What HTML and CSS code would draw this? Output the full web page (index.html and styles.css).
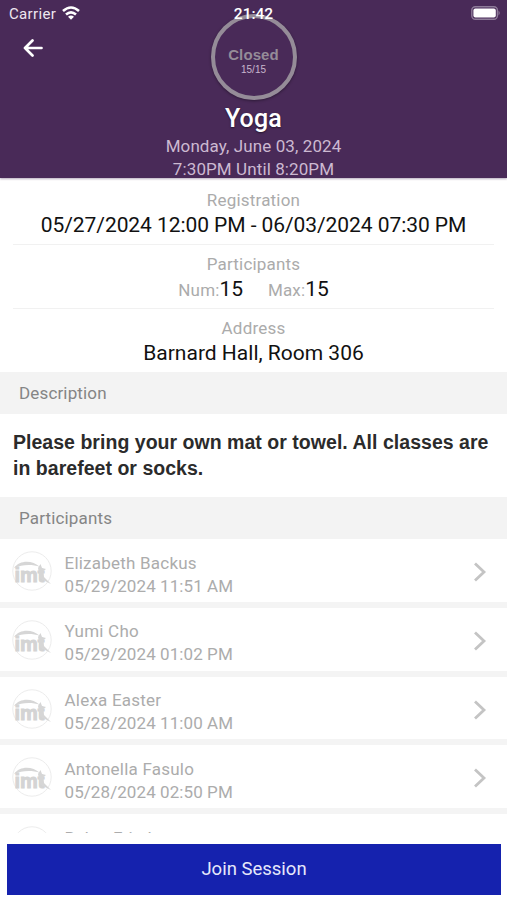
FILE: index.html
```html
<!DOCTYPE html>
<html lang="en">
<head>
<meta charset="utf-8">
<title>Yoga</title>
<link rel="stylesheet" href="styles.css">
</head>
<body>
<svg width="0" height="0" class="defs" aria-hidden="true">
  <symbol id="logo" viewBox="0 0 40 40">
    <circle cx="20" cy="20" r="19.2" fill="#fff" stroke="#ececec" stroke-width="1"/>
    <path d="M2 17C8 9 20 9 28 16C20 13 10 13.5 2 17Z" fill="#d6d6d6"/>
    <text x="2.5" y="31" textLength="30" lengthAdjust="spacingAndGlyphs" class="logo-text">imt</text>
    <path d="M28.5 13L30 17L34 18L31.5 20L32 26L39 33L33 30L28 27L26 17Z" fill="#d6d6d6"/>
  </symbol>
  <symbol id="chevron" viewBox="0 0 14 20"><path d="M2 1.5L11 10L2 18.5" fill="none" stroke="#c4c4c4" stroke-width="2.8"/></symbol>
</svg>
<div class="screen">
  <header class="hero">
    <div class="status">
      <span class="carrier">Carrier</span>
      <svg class="wifi" viewBox="0 0 18 14"><g fill="none" stroke="#fff" stroke-width="2.6"><path d="M1 5Q9-2 17 5"/><path d="M4 8.5Q9 4.2 14 8.5"/></g><path d="M6 10.8Q9 8.4 12 10.8L9 13.8Z" fill="#fff"/></svg>
      <span class="clock">21:42</span>
      <svg class="battery" viewBox="0 0 30 14"><rect x=".8" y=".8" width="25.6" height="12.4" rx="3.5" fill="none" stroke="#8e7b99" stroke-width="1.4"/><rect x="2.4" y="2.4" width="22.4" height="9.2" rx="2" fill="#fff"/><path d="M27.5 4.5Q30 7 27.5 9.5Z" fill="#8e7b99"/></svg>
    </div>
    <svg class="back" viewBox="0 0 20 18"><path d="M18.5 9H2M9.5 1.5L2 9L9.5 16.5" fill="none" stroke="#fff" stroke-width="2.7" stroke-linecap="round" stroke-linejoin="round"/></svg>
    <div class="ring"><span class="state">Closed</span><span class="count">15/15</span></div>
    <h1>Yoga</h1>
    <p class="date">Monday, June 03, 2024</p>
    <p class="time">7:30PM Until 8:20PM</p>
  </header>
  <section class="facts">
    <div class="fact"><div class="label">Registration</div><div class="value">05/27/2024 12:00 PM - 06/03/2024 07:30 PM</div></div>
    <div class="fact"><div class="label">Participants</div><div class="value nums"><span><small>Num:</small>15</span><span><small>Max:</small>15</span></div></div>
    <div class="fact"><div class="label">Address</div><div class="value addr">Barnard Hall, Room 306</div></div>
  </section>
  <h2>Description</h2>
  <p class="description">Please bring your own mat or towel. All classes are<br>in barefeet or socks.</p>
  <h2>Participants</h2>
  <ul class="list">
    <li><svg class="avatar"><use href="#logo"/></svg><div class="who"><div>Elizabeth Backus</div><div class="when">05/29/2024 11:51 AM</div></div><svg class="chev"><use href="#chevron"/></svg></li>
    <li><svg class="avatar"><use href="#logo"/></svg><div class="who"><div>Yumi Cho</div><div class="when">05/29/2024 01:02 PM</div></div><svg class="chev"><use href="#chevron"/></svg></li>
    <li><svg class="avatar"><use href="#logo"/></svg><div class="who"><div>Alexa Easter</div><div class="when">05/28/2024 11:00 AM</div></div><svg class="chev"><use href="#chevron"/></svg></li>
    <li><svg class="avatar"><use href="#logo"/></svg><div class="who"><div>Antonella Fasulo</div><div class="when">05/28/2024 02:50 PM</div></div><svg class="chev"><use href="#chevron"/></svg></li>
    <li><svg class="avatar"><use href="#logo"/></svg><div class="who"><div>Baker Fried</div></div></li>
  </ul>
  <button class="join">Join Session</button>
</div>
</body>
</html>
```
FILE: styles.css
```css
* { box-sizing: border-box; margin: 0; padding: 0; }
body { background: #fff; font-family: Roboto, sans-serif; }
.defs { position: absolute; }
.screen { width: 507px; height: 900px; overflow: hidden; display: flex; flex-direction: column; }
.hero { position: relative; height: 178px; flex: none; background: #492a58; color: #fff; display: flex; flex-direction: column; align-items: center; text-align: center; box-shadow: 0 1px 2px rgba(73, 42, 88, .4); }
.status { align-self: stretch; height: 26px; flex: none; display: flex; }
.carrier { margin: 4px 0 0 9px; font-size: 15px; line-height: 20px; letter-spacing: .35px; color: #eee6f0; }
.wifi { width: 18px; height: 14px; margin: 6px 0 0 6px; flex: none; }
.clock { position: absolute; z-index: 1; left: 50%; top: 4px; transform: translateX(-50%); font-size: 15.5px; line-height: 20px; font-weight: 500; }
.battery { width: 30px; height: 14px; margin: 6px 6px 0 auto; flex: none; }
.back { position: absolute; left: 23px; top: 39px; width: 20px; height: 18px; }
.ring { width: 86px; height: 86px; flex: none; margin-top: -12px; border: 4px solid #958c98; border-radius: 50%; display: flex; flex-direction: column; align-items: center; padding-top: 27px; box-shadow: 0 1px 3px rgba(0, 0, 0, .4); }
.state { font: bold 15px/19px "Liberation Sans", sans-serif; color: #958c98; letter-spacing: .1px; }
.count { font: 10px/12px "Liberation Sans", sans-serif; color: #c8b6cd; }
h1 { font-size: 25px; line-height: 30px; font-weight: 500; letter-spacing: .2px; margin-top: 4px; text-shadow: 0 1px 2px rgba(0, 0, 0, .5); }
.date, .time { font-size: 17px; line-height: 23px; color: #ccb9d1; letter-spacing: .1px; }
.date { margin-top: 1px; }
.facts { height: 194px; flex: none; padding: 3px 13px 0; text-align: center; }
.fact { height: 64px; padding-top: 8px; border-bottom: 1px solid #f1f1f1; }
.fact:last-child { border: 0; }
.label { font-size: 17px; line-height: 22px; color: #ababab; letter-spacing: .2px; }
.value { font-size: 21px; line-height: 29px; letter-spacing: -.07px; color: #111; white-space: nowrap; }
.addr { letter-spacing: 0; }
.nums { display: flex; justify-content: center; gap: 25px; }
.nums small { font-size: 17px; color: #ababab; letter-spacing: .15px; }
h2 { height: 42px; flex: none; padding-left: 19px; background: #f3f3f3; font-size: 17px; line-height: 43px; font-weight: 400; color: #858585; letter-spacing: .15px; }
.description { height: 83px; flex: none; padding: 15px 13px 0; font: bold 19.5px/26px "Liberation Sans", sans-serif; letter-spacing: .03px; color: #2b2b2b; white-space: nowrap; }
.list { list-style: none; height: 294px; flex: none; overflow: hidden; }
.list li { height: 68.75px; border-bottom: 6px solid #f4f4f4; padding: 12px 20px 0 12px; display: flex; }
.avatar { width: 40px; height: 40px; flex: none; }
.logo-text { font: bold 20px "Liberation Sans", sans-serif; fill: #d4d4d4; stroke: #d4d4d4; stroke-width: 1px; }
.who { margin: .6px 0 0 12.5px; flex: 1; font-size: 17px; line-height: 23px; color: #acacac; letter-spacing: .22px; }
.when { letter-spacing: .08px; }
.chev { width: 14px; height: 20px; margin-top: 11px; }
.join { width: 494px; height: 51px; flex: none; margin: 11px 0 0 7px; border: 0; background: #1522ae; color: #e6e8fa; font: 18.5px/50px Roboto, sans-serif; padding-bottom: 2px; }
```
